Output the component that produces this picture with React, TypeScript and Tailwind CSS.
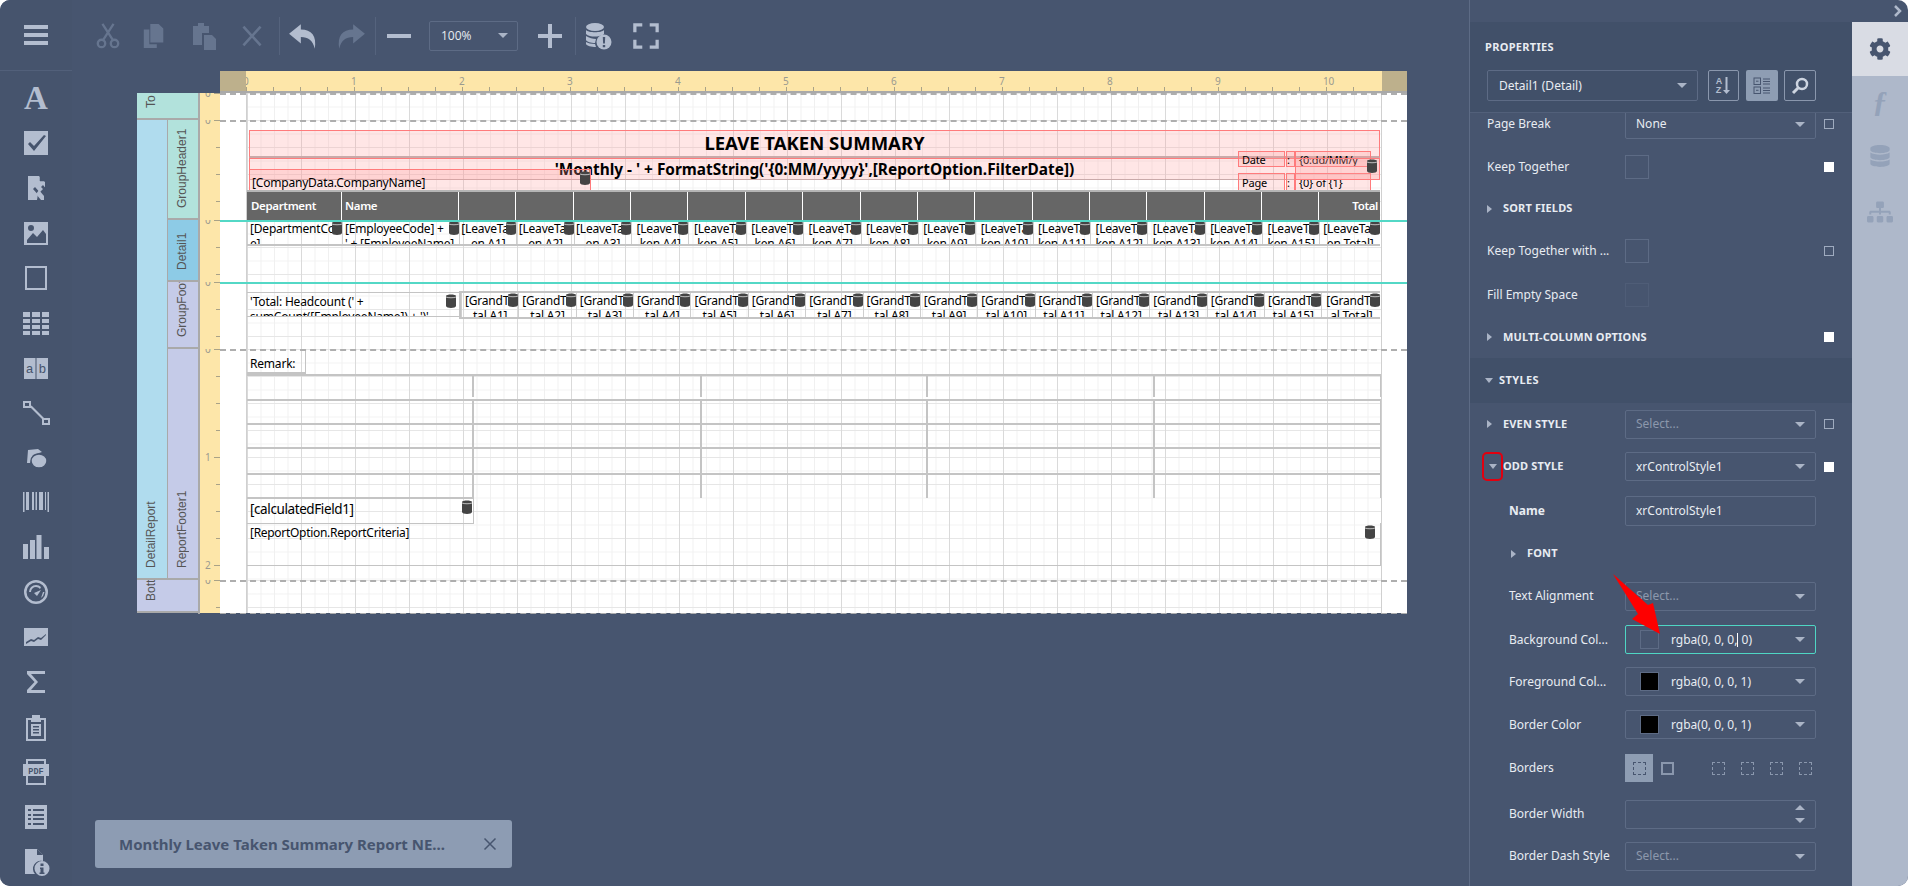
import { ReactNode } from "react";
import { FaCog, FaDatabase, FaSitemap } from "react-icons/fa";

const dis = "text-[#66758f]";
const on = "text-[#b3bdcf]";

const Ico = ({ children, w = 28, h = 28, className = "" }: { children: ReactNode; w?: number; h?: number; className?: string }) => (
  <svg width={w} height={h} viewBox="0 0 28 28" fill="currentColor" className={className}>
    {children}
  </svg>
);

const sideIcons: ReactNode[] = [
  <span className="font-['Liberation_Serif',serif] text-[33px] font-bold leading-none">A</span>,
  <Ico>
    <path fillRule="evenodd" d="M2 2h24v24H2z M8 13l-2 2 6 7L24 7l-2-1-10 11z" />
  </Ico>,
  <Ico>
    <path d="M6 2h11l6 6v5l-7 7-1 6H6z" />
    <path d="M18 2l5 5h-5z" fill="#46546d" stroke="#46546d" strokeWidth="0.5" />
    <path d="M11 15l8 9 2-2-8-9z M19 13l5 5 1-2-4-5z" fill="#46546d" />
    <path d="M17 16l5 6v4h-3l-5-6z" />
  </Ico>,
  <Ico>
    <path fillRule="evenodd" d="M2 3h24v23H2z M5 21l6-7 4 4 6-7 3 4v9H5z M9 6a3 3 0 100 6 3 3 0 000-6z" />
  </Ico>,
  <Ico>
    <path fillRule="evenodd" d="M3 2h22v24H3z M5 4v20h18V4z" />
  </Ico>,
  <Ico>
    <path d="M1 3h7v5H1zM10 3h8v5h-8zM20 3h7v5h-7zM1 10h7v4H1zM10 10h8v4h-8zM20 10h7v4h-7zM1 16h7v4H1zM10 16h8v4h-8zM20 16h7v4h-7zM1 22h7v4H1zM10 22h8v4h-8zM20 22h7v4h-7z" />
  </Ico>,
  <Ico>
    <path d="M2 4h11.500v21H2zM14.500 4H26v21H14.500z" />
    <text x="7.700" y="19" textAnchor="middle" fontSize="13" fontFamily="Liberation Mono" fill="#46546d">a</text>
    <text x="20.300" y="19" textAnchor="middle" fontSize="13" fontFamily="Liberation Mono" fill="#46546d">b</text>
  </Ico>,
  <Ico>
    <path fillRule="evenodd" d="M1 2h8v7H1z M3 4v3h4V4z M20 19h8v7h-8z M22 21v3h4v-3z" />
    <path d="M8 8l1.500-1.500L22 19l-1.500 1.500z" />
  </Ico>,
  <Ico>
    <path d="M6 6l10-1 4 3-9 3-3 8H5z" />
    <ellipse cx="17" cy="17" rx="8" ry="7" stroke="#46546d" strokeWidth="1.500" />
  </Ico>,
  <Ico>
    <path d="M1 4h1.500v20H1zM4 4h3v18H4zM10 4h2v18h-2zM13.500 4h1.500v18h-1.500zM17 4h4v18h-4zM23 4h1v18h-1zM25.500 4H27v20h-1.500z" />
  </Ico>,
  <Ico>
    <path d="M1 11h5v15H1zM8 7h5v19H8zM14.500 2h5v24h-5zM22 14h5v12h-5z" />
  </Ico>,
  <Ico>
    <path fillRule="evenodd" d="M14 2a12 12 0 100 24 12 12 0 000-24z M14 4.500a9.500 9.500 0 110 19 9.500 9.500 0 010-19z" />
    <path d="M14 7a7 7 0 00-7 7h2a5 5 0 015-5 5 5 0 014 2l1-2a7 7 0 00-5-2z M12 15l7-3-4 6z M19 20l2-2 1.500-4h-1.500z" />
  </Ico>,
  <Ico>
    <path fillRule="evenodd" d="M2 5h24v18H2z M4 19l5-3 3 1 4-3 3 1 5-4v1l-5 5-3-1-4 3-3-1-5 3z" />
  </Ico>,
  <Ico>
    <path d="M5 3h18v3H9l7 8-7 8h14v3H5v-3l7.500-8L5 6z" />
  </Ico>,
  <Ico>
    <path fillRule="evenodd" d="M4 5h6V2h8v3h6v23H4z M6 7v19h16V7h-3v2H9V7z" />
    <path d="M9 11h10v12H9z M11 13v1.500h6V13z M11 16v1.500h6V16z M11 19v1.500h6V19z" fillRule="evenodd" />
  </Ico>,
  <Ico>
    <path fillRule="evenodd" d="M4 1h20v5h3v12h-3v9H4v-9H1V6h3z M6 3v3h16V3z M6 18v7h16v-7z M3 8v8h22V8z" />
    <rect x="2" y="6" width="24" height="12" />
    <text x="14" y="15.500" textAnchor="middle" fontSize="8.500" fontFamily="Liberation Mono" fontWeight="700" fill="#46546d">PDF</text>
  </Ico>,
  <Ico>
    <path fillRule="evenodd" d="M3 2h22v24H3z M6 6v2h3V6z M11 6v2h11V6z M6 11v2h3v-2z M11 11v2h11v-2z M6 15v2h3v-2z M11 15v2h11v-2z M6 20v2h3v-2z M11 20v2h11v-2z" />
  </Ico>,
  <Ico>
    <path d="M3 1h12l6 6v6a8 8 0 00-8 13H3z" />
    <path d="M15 1l6 6h-6z" fill="#46546d" />
    <path fillRule="evenodd" d="M20 13a7.500 7.500 0 100 15 7.500 7.500 0 000-15z M18.500 15.500h3v2.500h-3z M18 19.500h3.500v5h1v1.500h-5v-1.500h1V21h-.500z" />
  </Ico>,
];

const Sidebar = () => (
  <aside className={`w-[72px] shrink-0 h-full bg-[#46546d] ${on}`}>
    <div className="h-[71px] border-b border-[#52607a] flex items-center justify-center">
      <div className="w-[24px] flex flex-col gap-[4px]">
        <div className="h-[4px] bg-[#b3bdcf]" />
        <div className="h-[4px] bg-[#b3bdcf]" />
        <div className="h-[4px] bg-[#b3bdcf]" />
      </div>
    </div>
    <div className="pt-[5px]">
      {sideIcons.map((icon, i) => (
        <div key={i} className="h-[44.900px] flex items-center justify-center">
          {icon}
        </div>
      ))}
    </div>
  </aside>
);

const Sep = () => <div className="w-px h-[38px] bg-[#55637d]" />;

const Toolbar = () => (
  <div className="h-[71px] flex items-center pl-[23px] font-['Open_Sans',sans-serif]">
    <div className={`w-[26px] flex justify-center ${dis}`}>
      <Ico w={26} h={26}>
        <g fill="none" stroke="currentColor" strokeWidth="2.500">
          <circle cx="7" cy="22" r="4" />
          <circle cx="21" cy="22" r="4" />
          <path d="M9 18L20 1M19 18L8 1" />
        </g>
      </Ico>
    </div>
    <div className={`w-[26px] ml-[20px] flex justify-center ${dis}`}>
      <Ico>
        <path d="M10 1h9l5 5v15H10z M3 7h6v16h8v4H3z" />
      </Ico>
    </div>
    <div className={`w-[28px] ml-[23px] flex justify-center ${dis}`}>
      <Ico>
        <path d="M3 4h5V1h6v3h5v7h-7v12H3z M14 13h8l4 4v11H14z" />
      </Ico>
    </div>
    <div className={`w-[24px] ml-[22px] flex justify-center ${dis}`}>
      <Ico w={24} h={24}>
        <path d="M4 3l10 11L24 3M4 25l10-11 10 11" fill="none" stroke="currentColor" strokeWidth="3" />
      </Ico>
    </div>
    <div className="ml-[15px]">
      <Sep />
    </div>
    <div className={`w-[30px] ml-[8px] flex justify-center ${on}`}>
      <Ico w={30} h={30}>
        <path d="M12 3L1 12l11 9v-6c7 0 11 3 13 11 2-12-3-18-13-18z" />
      </Ico>
    </div>
    <div className={`w-[30px] ml-[18px] flex justify-center ${dis}`}>
      <Ico w={30} h={30}>
        <path d="M16 3l11 9-11 9v-6C9 15 5 18 3 26 1 14 6 8 16 8z" />
      </Ico>
    </div>
    <div className="ml-[9px]">
      <Sep />
    </div>
    <div className="w-[24px] h-[4px] ml-[11px] bg-[#b3bdcf]" />
    <div className="ml-[18px] w-[89px] h-[30px] border border-[#5d6b85] rounded-[2px] flex items-center justify-between pl-[11px] pr-[9px] text-[12px] text-[#e8ecf2]">
      100%
      <span className="w-0 h-0 border-x-[5px] border-x-transparent border-t-[5px] border-t-[#aab4c6]" />
    </div>
    <div className="ml-[20px] relative w-[24px] h-[24px]">
      <div className="absolute left-0 top-[10px] w-[24px] h-[4px] bg-[#b3bdcf]" />
      <div className="absolute left-[10px] top-0 w-[4px] h-[24px] bg-[#b3bdcf]" />
    </div>
    <div className="ml-[13px]">
      <Sep />
    </div>
    <div className={`ml-[8px] ${on}`}>
      <Ico w={28} h={28}>
        <ellipse cx="11" cy="5" rx="9" ry="4" />
        <path d="M2 8c2 3 16 3 18 0v4c-1 1-3 2-5 2-3 1-10 1-13-2z M2 14c3 2 7 3 10 3l-1 4c-4 0-8-1-9-3z M2 20c2 1 5 2 9 2l1 3c-5 0-9-1-10-3z" />
        <circle cx="20" cy="20" r="7.500" />
        <path d="M18.800 15h2.400l-.3 6.500h-1.800z M18.800 23h2.400v2.200h-2.400z" fill="#47556f" />
      </Ico>
    </div>
    <div className={`ml-[21px] ${on}`}>
      <Ico w={26} h={26}>
        <path d="M2 10V2h8M18 2h8v8M26 18v8h-8M10 26H2v-8" fill="none" stroke="currentColor" strokeWidth="3.500" />
      </Ico>
    </div>
  </div>
);

const DbTag = ({ className = "" }: { className?: string }) => (
  <svg width="10" height="14" viewBox="0 0 10 14" className={`absolute ${className}`}>
    <path d="M0 2c0-2 10-2 10 0v10c0 2.500-10 2.500-10 0z" fill="#444" />
    <path d="M0 3c2 1 8 1 10 0" stroke="#ddd" strokeWidth="0.800" fill="none" />
  </svg>
);

const colWidths = ["w-[95px]", "w-[117px]"];
const nums = Array.from({ length: 15 }, (_, i) => i + 1);

const Cell = ({ a, b, w, tag = true, left = false }: { a: string; b?: string; w: string; tag?: boolean; left?: boolean }) => (
  <div className={`relative h-full shrink-0 overflow-hidden border-l border-[#cfcfcf] ${w} ${left ? "text-left pl-[2px]" : "text-center"}`}>
    <div className="leading-[14.500px] pt-[1px] whitespace-nowrap">{a}</div>
    <div className="leading-[14.500px] whitespace-nowrap">{b}</div>
    {tag && <DbTag className="right-0 top-0" />}
  </div>
);

const Pink = ({ className, children }: { className: string; children?: ReactNode }) => (
  <div className={`absolute border border-[#ff7b7c] bg-[#ff9a9c]/25 ${className}`}>{children}</div>
);

const gridBg =
  "bg-[linear-gradient(to_right,#dadada_1px,transparent_1px),linear-gradient(to_bottom,#e6e6e6_1px,transparent_1px),linear-gradient(to_right,#f0f0f0_1px,transparent_1px),linear-gradient(to_bottom,#f2f2f2_1px,transparent_1px)] bg-[size:54px_54px,54px_27px,13.500px_13.500px,13.500px_13.500px]";

const Band = ({ h, children, teal }: { h: string; children?: ReactNode; teal?: boolean }) => (
  <div className={`relative flex bg-white ${h}`}>
    <div className="w-[26px] shrink-0" />
    <div className={`relative w-[1136px] shrink-0 border-l border-r border-[#d0d0d0] ${gridBg}`}>{children}</div>
    <div className="absolute left-0 right-0 top-0 border-t-2 border-dashed border-[#aeaeae]" />
    {teal && <div className="absolute left-0 right-0 top-0 h-[2px] bg-[#53d8c6]" />}
  </div>
);

const HeaderBand = () => (
  <Band h="h-[100px]">
    <Pink className="left-[2px] top-[10px] w-[1131px] h-[28px] border-b-2 border-b-[#c9a9a9]">
      <div className="text-center font-bold text-[18.500px] leading-[24px] text-black tracking-normal">LEAVE TAKEN SUMMARY</div>
    </Pink>
    <Pink className="left-[2px] top-[38px] w-[1131px] h-[22px] border-b-[#c9a9a9]">
      <div className="text-center font-bold text-[15.400px] leading-[22px] text-black tracking-normal">
        'Monthly - ' + FormatString('{"{"}0:MM/yyyy{"}"}',[ReportOption.FilterDate])
      </div>
    </Pink>
    <Pink className="left-[2px] top-[49px] w-[342px] h-[22px]">
      <div className="pl-[2px] pt-[5px] text-[12px] leading-[16px]">[CompanyData.CompanyName]</div>
    </Pink>
    <Pink className="left-[991px] top-[31px] w-[47px] h-[16px] pl-[3px] text-[11px] leading-[15px]">Date</Pink>
    <Pink className="left-[1039px] top-[31px] w-[9px] h-[16px] text-[11px] leading-[15px]">:</Pink>
    <Pink className="left-[1048px] top-[31px] w-[76px] h-[16px] pl-[3px] text-[11px] leading-[15px] overflow-hidden whitespace-nowrap">
      {"{0:dd/MM/y"}
    </Pink>
    <Pink className="left-[991px] top-[53px] w-[47px] h-[18px] pl-[3px] text-[11px] leading-[17px]">Page</Pink>
    <Pink className="left-[1039px] top-[53px] w-[9px] h-[18px] text-[11px] leading-[17px]">:</Pink>
    <Pink className="left-[1048px] top-[53px] w-[76px] h-[18px] pl-[3px] text-[11px] leading-[17px]">{"{0} of {1}"}</Pink>
    <Pink className="left-[1048px] top-[38px] w-[85px] h-[22px]" />
    <DbTag className="left-[333px] top-[51px]" />
    <DbTag className="left-[1120px] top-[39px]" />
    <div className="absolute left-0 top-[70px] w-[1133px] h-[30px] flex bg-[#666] border-t-2 border-[#b5b5b5] text-white text-[11.500px] font-semibold tracking-[-0.35px] leading-[28px]">
      <div className={`${colWidths[0]} border-r border-white pl-[4px]`}>Department</div>
      <div className={`${colWidths[1]} border-r border-white pl-[3px]`}>Name</div>
      {nums.map((n) => (
        <div key={n} className="w-[57.360px] border-r border-white" />
      ))}
      <div className="flex-1 text-right pr-[2px]">Total</div>
    </div>
  </Band>
);

const DetailBand = () => (
  <Band h="h-[62px]" teal>
    <div className="absolute left-0 top-[1px] w-[1133px] h-[25px] flex border-b-2 border-[#c4c4c4] text-[12px] text-black">
      <Cell w={colWidths[0]} a="[DepartmentCo" b="e]" left />
      <Cell w={colWidths[1]} a="[EmployeeCode] + " b="' + [EmployeeName]" left />
      {nums.map((n) => (
        <Cell key={n} w="w-[57.360px]" a={n < 4 ? "[LeaveTak" : "[LeaveTa"} b={`${n < 4 ? "en" : "ken"} A${n}]`} />
      ))}
      <Cell w="w-[60.600px]" a="[LeaveTak" b="en Total]" />
    </div>
  </Band>
);

const FooterBand = () => (
  <Band h="h-[67px]" teal>
    <div className="absolute left-0 top-[10px] w-[212px] h-[25px] overflow-hidden border-t border-b border-[#c4c4c4] text-[12px] leading-[14.500px] pl-[3px] pt-[2px] whitespace-nowrap">
      <div>'Total: Headcount (' +</div>
      <div>sumCount([EmployeeName]) + ')'</div>
      <DbTag className="right-[3px] top-[1px]" />
    </div>
    <div className="absolute left-[212px] top-[9px] w-[921px] h-[28px] flex border-2 border-r-0 border-[#c4c4c4] text-[12px]">
      {nums.map((n) => (
        <Cell key={n} w="w-[57.360px]" a="[GrandTo" b={`tal A${n}]`} />
      ))}
      <Cell w="w-[59px]" a="[GrandTo" b="al Total]" />
    </div>
  </Band>
);

const tableRows = ["h-[23px] mb-[2px]", "h-[24px]", "h-[24px]", "h-[26px]", "h-[25px]"];
const tableCols = ["w-[227px]", "w-[228px]", "w-[226px]", "w-[227px]", "w-[226px]"];

const ReportFooterBand = () => (
  <Band h="h-[231px]">
    <div className="absolute left-0 top-0 w-[59px] h-[25px] border-r border-b-2 border-[#c4c4c4] pl-[3px] text-[12px] leading-[29px]">Remark:</div>
    <div className="absolute left-0 top-[25px] w-[1134px]">
      {tableRows.map((r, i) => (
        <div key={i} className={`flex border-t-2 border-[#c4c4c4] ${r}`}>
          {tableCols.map((c, j) => (
            <div key={j} className={`${c} h-full border-r-2 border-[#c4c4c4] last:border-r`} />
          ))}
        </div>
      ))}
    </div>
    <div className="absolute left-0 top-[148px] w-[227px] h-[27px] border-t-2 border-b border-r border-[#c4c4c4] pl-[3px] text-[13.500px] tracking-[-0.4px] leading-[20px]">
      [calculatedField1]
      <DbTag className="right-[1px] top-[1px]" />
    </div>
    <div className="absolute left-0 top-[174px] w-[1134px] h-[43px] border-b border-r border-[#c4c4c4] pl-[3px] pt-[2px] text-[12px] tracking-[-0.3px] leading-[16px]">
      [ReportOption.ReportCriteria]
      <DbTag className="right-[5px] top-[2px]" />
    </div>
  </Band>
);

const rulerLabels = Array.from({ length: 11 }, (_, i) => i);
const rulerTicks = Array.from({ length: 42 }, (_, i) => i);

const TopRuler = () => (
  <div className="flex h-[22px] border-b-2 border-[#a9a9a9] bg-[#fde6a9]">
    <div className="w-[26px] bg-[#bdb08c]" />
    <div className="relative w-[1136px] overflow-hidden">
      {rulerTicks.map((t) => (
        <div key={t} className="absolute bottom-0 w-px h-[4px] bg-[#a9a287]" style={{ left: t * 27 }} />
      ))}
      {rulerLabels.map((n) => (
        <span key={n} className="absolute top-[4px] -ml-[3px] text-[10px] leading-[12px] text-[#9a9a90]" style={{ left: n * 108 }}>
          {n}
        </span>
      ))}
    </div>
    <div className="flex-1 bg-[#bdb08c]" />
  </div>
);

const SideRuler = ({ h, count }: { h: string; count: number }) => (
  <div className={`relative overflow-hidden bg-[#fde6a9] ${h}`}>
    {Array.from({ length: count }, (_, i) => i).map((i) =>
      i % 4 === 0 ? (
        <span key={i}>
          <span className="absolute left-[5px] -mt-[6px] text-[10px] leading-[12px] text-[#9a9a90]" style={{ top: i * 27 }}>
            {i / 4}
          </span>
          <div className="absolute right-0 w-[6px] h-px bg-[#a9a287]" style={{ top: i * 27 }} />
        </span>
      ) : (
        <div key={i} className="absolute right-0 w-[4px] h-px bg-[#a9a287]" style={{ top: i * 27 }} />
      )
    )}
  </div>
);

const VLabel = ({ text, className, inner = "w-full" }: { text: string; className: string; inner?: string }) => (
  <div className={`overflow-hidden border-b-2 border-[#a9a9a9] ${className}`}>
    <div className={`h-full flex items-center [writing-mode:vertical-rl] rotate-180 pt-[10px] pl-[3px] whitespace-nowrap font-['Liberation_Sans',sans-serif] text-[12px] leading-none text-[#555] tracking-normal ${inner}`}>
      {text}
    </div>
  </div>
);

const Designer = () => (
  <div className="flex pl-[65px] font-['Noto_Sans',sans-serif] text-black tracking-[-0.2px]">
    <div className="w-[61px] mt-[22px] shrink-0">
      <VLabel text="To" className="h-[27px] bg-[#b2e2dc]" inner="w-[31px]" />
      <div className="flex h-[460px]">
        <div className="w-[31px] h-full border-r border-[#a9a9a9] bg-[#b0dcee]">
          <VLabel text="DetailReport" className="h-full" />
        </div>
        <div className="w-[30px]">
          <VLabel text="GroupHeader1" className="h-[100px] bg-[#b2e2dc]" />
          <VLabel text="Detail1" className="h-[62px] bg-[#8dcbe6]" />
          <VLabel text="GroupFooter1" className="h-[67px] bg-[#c5cbe8]" />
          <VLabel text="ReportFooter1" className="h-[231px] bg-[#c5cbe8]" />
        </div>
      </div>
      <VLabel text="BottomMargin" className="h-[33px] bg-[#c5cbe8]" inner="w-[31px]" />
    </div>
    <div className="w-[22px] mt-[22px] shrink-0 border-l-2 border-[#a9a9a9]">
      <SideRuler h="h-[27px]" count={1} />
      <SideRuler h="h-[100px]" count={4} />
      <SideRuler h="h-[62px]" count={3} />
      <SideRuler h="h-[67px]" count={3} />
      <SideRuler h="h-[231px]" count={9} />
      <SideRuler h="h-[33px]" count={2} />
    </div>
    <div className="w-[1187px] shrink-0">
      <TopRuler />
      <Band h="h-[27px]" />
      <HeaderBand />
      <DetailBand />
      <FooterBand />
      <ReportFooterBand />
      <Band h="h-[33px]" />
      <div className="border-t-2 border-dashed border-[#aeaeae] -mt-[1px]" />
    </div>
  </div>
);

const Caret = () => <span className="w-0 h-0 border-x-[5px] border-x-transparent border-t-[5px] border-t-[#aab4c6]" />;

const Check = ({ checked = false }: { checked?: boolean }) => (
  <div className={`w-[10px] h-[10px] border border-[#9fabbf] ${checked ? "bg-white border-white" : ""}`} />
);

const Select = ({ value, muted, swatch, focus }: { value?: ReactNode; muted?: boolean; swatch?: "black" | "none"; focus?: boolean }) => (
  <div className={`w-[191px] h-[29px] rounded-[2px] border flex items-center justify-between pr-[10px] ${focus ? "border-[#4fd6c4]" : "border-[#5d6b85]"} ${swatch ? "pl-[14px]" : "pl-[10px]"}`}>
    <span className="flex items-center">
      {swatch && (
        <span className={`w-[19px] h-[19px] mr-[12px] border border-[#5d6b85] ${swatch === "black" ? "bg-black" : ""}`} />
      )}
      <span className={muted ? "text-[#8c98ac]" : ""}>{value}</span>
    </span>
    <Caret />
  </div>
);

const Box = ({ faint }: { faint?: boolean }) => (
  <div className={`w-[24px] h-[24px] border ${faint ? "border-[#4f5d77]" : "border-[#5d6b85]"}`} />
);

const Row = ({ h, label, ctl, check, indent = "pl-[17px]", head, arrow }: { h: string; label: string; ctl?: ReactNode; check?: "on" | "off"; indent?: string; head?: boolean; arrow?: "right" | "down" }) => (
  <div className={`flex items-center ${h}`}>
    <div className={`w-[155px] shrink-0 flex items-center whitespace-nowrap ${indent} ${head ? "font-bold text-[11px] tracking-[0.15px]" : ""}`}>
      {arrow === "right" && <span className="w-0 h-0 mr-[11px] border-y-[4px] border-y-transparent border-l-[5px] border-l-[#aab4c6]" />}
      {arrow === "down" && <span className="w-0 h-0 mr-[6px] border-x-[4px] border-x-transparent border-t-[5px] border-t-[#aab4c6]" />}
      {label}
    </div>
    <div className="w-[191px] shrink-0">{ctl}</div>
    <div className="ml-[8px]">{check && <Check checked={check === "on"} />}</div>
  </div>
);

const BorderIcon = ({ solid }: { solid?: boolean }) => (
  <div className={`w-[13px] h-[13px] border-[#8a97ad] ${solid ? "border-2" : "border border-dashed"}`} />
);

const PropertyPanel = () => (
  <div className="relative w-[439px] shrink-0 h-full border-l border-[#5d6b85] font-['Noto_Sans',sans-serif] text-[12px] text-[#e8ecf2] flex flex-col">
    <div className="h-[22px] shrink-0 flex items-center justify-end pr-[5px] text-[#aeb8ca]">
      <svg width="10" height="12" viewBox="0 0 10 12" fill="none" stroke="currentColor" strokeWidth="2.500">
        <path d="M2 1l5 5-5 5" />
      </svg>
    </div>
    <div className="flex-1 flex min-h-0">
      <div className="w-[383px] flex flex-col">
        <div className="h-[91px] shrink-0 bg-[#415069] border-b border-[#52607a] pl-[17px]">
          <div className="pt-[17px] -ml-[2px] text-[11px] font-bold leading-[16px] tracking-[0.3px]">PROPERTIES</div>
          <div className="mt-[15px] flex items-center">
            <div className="w-[211px] h-[31px] rounded-[2px] border border-[#5d6b85] flex items-center justify-between pl-[11px] pr-[10px] text-[12px]">
              Detail1 (Detail)
              <Caret />
            </div>
            <div className="ml-[10px] w-[31px] h-[31px] rounded-[2px] border border-[#8a97ad] flex items-center justify-center text-[#b3bdcf]">
              <div className="flex flex-col text-[9px] font-bold leading-[9px] font-['Liberation_Sans',sans-serif]">
                <span>A</span>
                <span>Z</span>
              </div>
              <svg width="9" height="18" viewBox="0 0 9 18" fill="currentColor">
                <path d="M3.500 0h2v13H8l-3.500 4L1 13h2.500z" />
              </svg>
            </div>
            <div className="ml-[7px] w-[32px] h-[31px] rounded-[2px] bg-[#8e9db3] flex items-center justify-center">
              <svg width="18" height="18" viewBox="0 0 18 18" fill="none" stroke="#47556f">
                <rect x="1" y="1" width="6.500" height="6.500" />
                <rect x="1" y="10" width="6.500" height="6.500" />
                <path d="M3 4.200h2.500M3 13.300h2.500M10 2h7M10 4.500h7M10 7h7M10 11h7M10 13.500h7M10 16h7" />
              </svg>
            </div>
            <div className="ml-[6px] w-[32px] h-[31px] rounded-[2px] border border-[#8a97ad] flex items-center justify-center text-[#cdd4e0]">
              <svg width="18" height="18" viewBox="0 0 18 18" fill="none" stroke="currentColor">
                <circle cx="11" cy="7" r="5" strokeWidth="2.500" />
                <path d="M7 11l-5 5" strokeWidth="3" />
              </svg>
            </div>
          </div>
        </div>
        <div className="flex-1 overflow-hidden">
          <div className="-mt-[11px]">
            <Row h="h-[44px]" label="Page Break" ctl={<Select value="None" />} check="off" />
            <Row h="h-[42px]" label="Keep Together" ctl={<Box />} check="on" />
            <Row h="h-[41px]" label="SORT FIELDS" head arrow="right" />
            <Row h="h-[44px]" label="Keep Together with ..." ctl={<Box />} check="off" />
            <Row h="h-[43px]" label="Fill Empty Space" ctl={<Box faint />} />
            <Row h="h-[42px]" label="MULTI-COLUMN OPTIONS" head arrow="right" check="on" />
            <div className="h-[45px] bg-[#415069] flex items-center pl-[15px] font-bold text-[11px] tracking-[0.4px]">
              <span className="w-0 h-0 mr-[6px] border-x-[4px] border-x-transparent border-t-[5px] border-t-[#aab4c6]" />
              STYLES
            </div>
            <Row h="h-[42px]" label="EVEN STYLE" head arrow="right" ctl={<Select value="Select..." muted />} check="off" />
            <Row h="h-[43px]" label="ODD STYLE" head arrow="down" indent="pl-[19px]" ctl={<Select value="xrControlStyle1" />} check="on" />
            <Row
              h="h-[46px]"
              label="Name"
              indent="pl-[39px] font-bold"
              ctl={<div className="h-[30px] rounded-[2px] border border-[#5d6b85] flex items-center pl-[10px]">xrControlStyle1</div>}
            />
            <Row h="h-[39px]" label="FONT" head arrow="right" indent="pl-[41px]" />
            <Row h="h-[46px]" label="Text Alignment" indent="pl-[39px]" ctl={<Select value="Select..." muted />} />
            <Row
              h="h-[41px]"
              label="Background Col..."
              indent="pl-[39px]"
              ctl={
                <Select
                  swatch="none"
                  focus
                  value={
                    <>
                      rgba(0, 0, 0,<span className="inline-block w-px h-[14px] align-middle bg-white" /> 0)
                    </>
                  }
                />
              }
            />
            <Row h="h-[43px]" label="Foreground Col..." indent="pl-[39px]" ctl={<Select swatch="black" value="rgba(0, 0, 0, 1)" />} />
            <Row h="h-[43px]" label="Border Color" indent="pl-[39px]" ctl={<Select swatch="black" value="rgba(0, 0, 0, 1)" />} />
            <Row
              h="h-[44px]"
              label="Borders"
              indent="pl-[39px]"
              ctl={
                <div className="flex items-center">
                  <div className="w-[28px] h-[28px] bg-[#8e9db3] flex items-center justify-center">
                    <div className="w-[13px] h-[13px] border border-dashed border-[#47556f]" />
                  </div>
                  <div className="ml-[8px]">
                    <BorderIcon solid />
                  </div>
                  <div className="ml-[38px]">
                    <BorderIcon />
                  </div>
                  <div className="ml-[16px]">
                    <BorderIcon />
                  </div>
                  <div className="ml-[16px]">
                    <BorderIcon />
                  </div>
                  <div className="ml-[16px]">
                    <BorderIcon />
                  </div>
                </div>
              }
            />
            <Row
              h="h-[48px]"
              label="Border Width"
              indent="pl-[39px]"
              ctl={
                <div className="h-[29px] rounded-[2px] border border-[#5d6b85] flex items-center justify-end pr-[10px]">
                  <div className="flex flex-col gap-[8px]">
                    <span className="w-0 h-0 border-x-[5px] border-x-transparent border-b-[5px] border-b-[#aab4c6]" />
                    <span className="w-0 h-0 border-x-[5px] border-x-transparent border-t-[5px] border-t-[#aab4c6]" />
                  </div>
                </div>
              }
            />
            <Row h="h-[36px]" label="Border Dash Style" indent="pl-[39px]" ctl={<Select value="Select..." muted />} />
          </div>
        </div>
      </div>
      <div className="w-[56px] bg-[#aeb8ca] text-[#94a2b9]">
        <div className="h-[54px] bg-[#d9dce4] flex items-center justify-center text-[#47556f]">
          <FaCog size={22} />
        </div>
        <div className="h-[50px] flex items-center justify-center font-['Liberation_Serif',serif] italic font-bold text-[30px] leading-none">ƒ</div>
        <div className="h-[60px] flex items-center justify-center">
          <FaDatabase size={22} />
        </div>
        <div className="h-[52px] flex items-center justify-center">
          <FaSitemap size={26} />
        </div>
      </div>
    </div>
    <div className="absolute left-[12px] top-[452px] w-[21px] h-[29px] rounded-[5px] border-2 border-[#e2000f]" />
    <svg className="absolute left-[141px] top-[572px]" width="50" height="62" viewBox="0 0 50 62" fill="#fe0000">
      <path d="M2 2L37 33l5-2 7 31-28-15 6-5z" />
    </svg>
  </div>
);

const Toast = () => (
  <div className="absolute left-[95px] top-[820px] w-[417px] h-[48px] rounded-[3px] bg-[#8d9cb3] flex items-center justify-between pl-[24px] pr-[15px] font-['Noto_Sans',sans-serif] text-[15px] font-bold text-[#47556f]">
    <span>Monthly Leave Taken Summary Report NE...</span>
    <svg width="14" height="14" viewBox="0 0 14 14" stroke="currentColor" strokeWidth="1.500">
      <path d="M1.500 1.500l11 11M12.500 1.500l-11 11" />
    </svg>
  </div>
);

export default function App() {
  return (
    <div className="relative w-[1914px] h-[886px] bg-white pr-[6px] overflow-hidden">
      <div className="flex h-full rounded-[10px] overflow-hidden bg-[#47556f]">
        <Sidebar />
        <div className="w-[1397px] shrink-0">
          <Toolbar />
          <Designer />
        </div>
        <PropertyPanel />
      </div>
      <Toast />
    </div>
  );
}
